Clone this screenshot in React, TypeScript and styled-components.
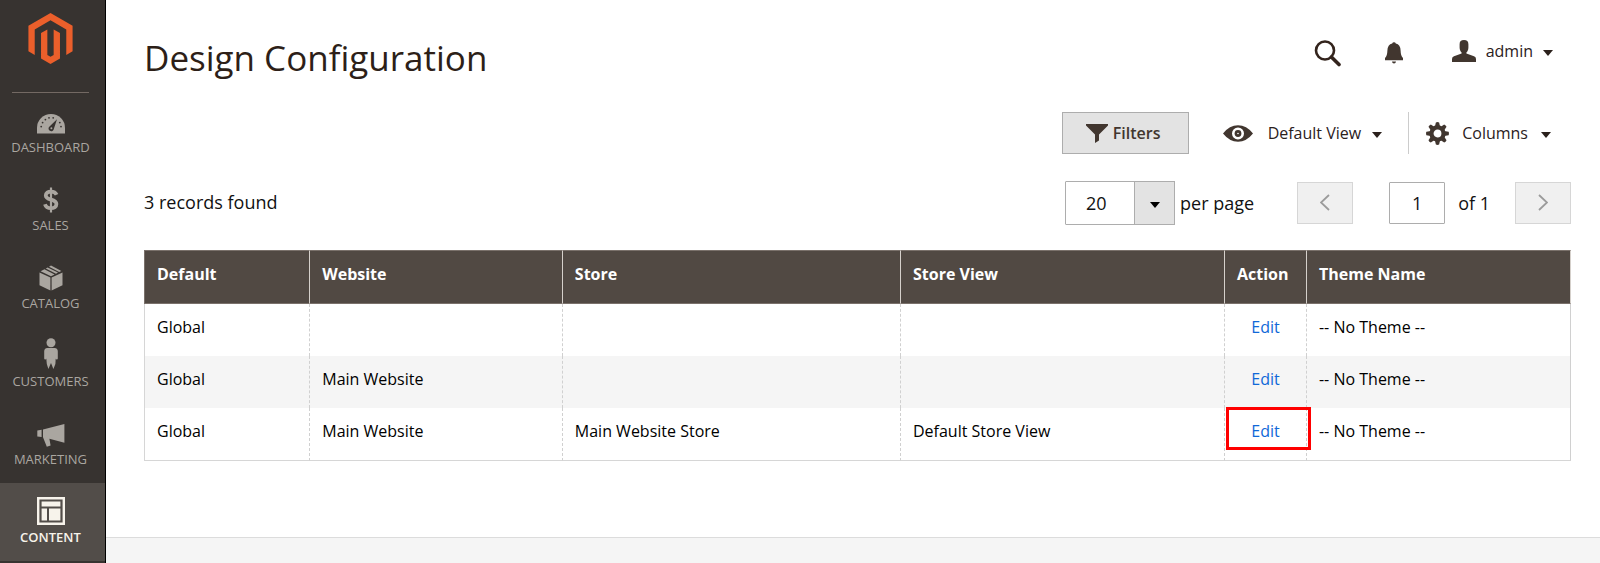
import React from "react";
import styled, { createGlobalStyle } from "styled-components";

const GlobalStyle = createGlobalStyle`
  *, *::before, *::after { box-sizing: border-box; }
  body { margin: 0; background: #fff; }
  body, button, input, select {
    font-family: "Open Sans", "Noto Sans", sans-serif;
    font-size: 16px;
    line-height: 24px;
    color: #111;
  }
  button, input, select { margin: 0; padding: 0; }
`;

const Page = styled.div`
  display: flex;
  min-height: 100vh;
`;

const Sidebar = styled.nav`
  flex: none;
  width: 106px;
  background: #373330;
  border-right: 1px solid #000;
`;

const LogoLink = styled.a`
  display: flex;
  justify-content: center;
  margin: 0 16px 0 12px;
  padding: 13px 0 28px;
  border-bottom: 1px solid #736963;
`;

const MenuList = styled.ul`
  list-style: none;
  margin: 0;
  padding: 0;
`;

const MenuLink = styled.a<{ $active?: boolean }>`
  display: flex;
  flex-direction: column;
  align-items: center;
  height: 78px;
  padding: 12px 4px 0 0;
  font-size: 13px;
  line-height: 20px;
  text-decoration: none;
  color: ${(p) => (p.$active ? "#f7f3eb" : "#aaa6a0")};
  background: ${(p) => (p.$active ? "#524d49" : "transparent")};
  font-weight: ${(p) => (p.$active ? 600 : 400)};
`;

const MenuIcon = styled.span`
  display: flex;
  align-items: flex-end;
  justify-content: center;
  height: 30px;
  margin-bottom: 2px;
`;

const Main = styled.div`
  flex: 1;
  min-width: 0;
  display: flex;
  flex-direction: column;
`;

const Content = styled.main`
  padding: 34px 29px 76px 38px;
`;

const Header = styled.header`
  display: flex;
  justify-content: space-between;
  align-items: flex-start;
  padding-right: 18px;
`;

const Title = styled.h1`
  margin: 0;
  font-size: 35px;
  line-height: 48px;
  font-weight: 400;
  color: #2d1f18;
`;

const HeaderTools = styled.div`
  display: flex;
  align-items: center;
  height: 38px;
  gap: 44px;
`;

const PlainButton = styled.button<{ $gap?: number }>`
  display: flex;
  align-items: center;
  gap: ${(p) => p.$gap ?? 0}px;
  border: 0;
  background: none;
  color: #2b211c;
`;

const UserButton = styled(PlainButton)`
  margin-left: 5px;
  padding-bottom: 4px;
`;

const Toolbar = styled.div`
  display: flex;
  justify-content: flex-end;
  align-items: center;
  margin-top: 30px;
  padding-right: 20px;
`;

const FiltersButton = styled.button`
  display: flex;
  align-items: center;
  justify-content: center;
  gap: 5px;
  width: 127px;
  height: 42px;
  padding-right: 4px;
  border: 1px solid #adadad;
  background: #e3e3e3;
  color: #41362f;
  font-weight: 600;
`;

const ViewButton = styled(PlainButton)`
  margin-left: 34px;
`;

const ColumnsButton = styled(PlainButton)`
  height: 42px;
  margin-left: 26px;
  padding-left: 17px;
  border-left: 1px solid #ccc;
`;

const Caret = styled.span<{ $space?: number }>`
  margin: 3px 0 0 ${(p) => p.$space ?? 0}px;
  border: 5px solid transparent;
  border-top: 6px solid currentColor;
  border-bottom: 0;
`;

const PagingRow = styled.div`
  display: flex;
  align-items: center;
  justify-content: space-between;
  margin-top: 27px;
  font-size: 18px;
`;

const Records = styled.div`
  padding-bottom: 2px;
`;

const Paging = styled.div`
  display: flex;
  align-items: center;
`;

const SelectBox = styled.span`
  display: grid;
  grid-template-columns: 69px 41px;
  height: 44px;
`;

const PageSize = styled.select`
  grid-area: 1 / 1 / 2 / 3;
  appearance: none;
  width: 100%;
  padding-left: 20px;
  border: 1px solid #adadad;
  border-radius: 1px;
  background: #fff;
  font-size: 18px;
`;

const SelectArrow = styled.span`
  grid-area: 1 / 2;
  display: flex;
  align-items: center;
  justify-content: center;
  pointer-events: none;
  border: 1px solid #adadad;
  background: #e3e3e3;
  color: #000;
`;

const PerPage = styled.label`
  margin: 0 43px 0 5px;
`;

const PagerButton = styled.button`
  display: flex;
  align-items: center;
  justify-content: center;
  width: 56px;
  height: 42px;
  border: 1px solid #d6d6d6;
  background: #f0f0f0;
`;

const PageInput = styled.input`
  width: 56px;
  height: 42px;
  margin-left: 36px;
  border: 1px solid #adadad;
  border-radius: 1px;
  text-align: center;
  font-size: 18px;
`;

const PageTotal = styled.label`
  margin: 0 25px 0 13px;
`;

const Grid = styled.table`
  width: 100%;
  margin-top: 25px;
  table-layout: fixed;
  border-collapse: separate;
  border-spacing: 0;
`;

const HeadCell = styled.th`
  height: 54px;
  padding: 0 12px 7px;
  text-align: left;
  font-weight: 700;
  color: #fff;
  background: #514943;
  border-top: 1px solid #7a716b;
  border-bottom: 1px solid #7a716b;
  border-right: 1px solid #d5d0cb;
  &:first-child { border-left: 1px solid #7a716b; }
`;

const Row = styled.tr`
  &:nth-child(even) { background: #f5f5f5; }
  &:last-child td { border-bottom: 1px solid #d6d6d6; height: 53px; }
`;

const Cell = styled.td<{ $center?: boolean }>`
  height: 52px;
  position: relative;
  padding: 0 12px 7px;
  color: #000;
  text-align: ${(p) => (p.$center ? "center" : "left")};
  border-right: 1px dashed #d0d0d0;
  &:first-child { border-left: 1px solid #d6d6d6; }
  &:last-child { border-right-style: solid; }
`;

const EditLink = styled.a`
  color: #1068d8;
  text-decoration: none;
`;

const Highlight = styled.span`
  position: absolute;
  z-index: 1;
  inset: -1px -5px 10px 1px;
  border: 3px solid #f00;
  pointer-events: none;
`;

const Footer = styled.footer`
  flex: 1;
  min-height: 26px;
  border-top: 1px solid #dcdcdc;
  background: #f5f5f5;
`;

const DashboardIcon = () => (
  <svg width="28" height="21" viewBox="0 0 28 21" fill="#aaa6a0">
    <path d="M0 19.5V14A14 14 0 0 1 28 14V19.5Z" />
    <path d="M20 5.2L16.9 14.8A2.7 2.7 0 1 1 12.5 12.4Z" fill="#373330" />
    <circle cx="14.4" cy="14.2" r="1" />
    <g fill="#373330">
      <circle cx="4.2" cy="12.6" r="0.9" />
      <circle cx="5.6" cy="8.6" r="0.9" />
      <circle cx="8.4" cy="5.6" r="0.9" />
      <circle cx="12" cy="3.8" r="0.9" />
      <circle cx="16.2" cy="3.8" r="0.9" />
      <circle cx="22.8" cy="8.6" r="0.9" />
      <circle cx="24" cy="12.6" r="0.9" />
    </g>
  </svg>
);

const SalesIcon = () => (
  <svg width="16" height="26" viewBox="0 0 16 26" fill="none" stroke="#aaa6a0">
    <path d="M13.6 7.8C12.6 5.6 10.6 4.6 8 4.6C5 4.6 2.8 6 2.8 8.6C2.8 14 13.4 11.4 13.4 17C13.4 19.8 11 21.2 8 21.2C5 21.2 2.8 20 2 17.2" strokeWidth="3.8" />
    <path d="M8 0.5V25.5" strokeWidth="2.2" />
  </svg>
);

const CatalogIcon = () => (
  <svg width="24" height="26" viewBox="0 0 24 26" fill="#aaa6a0">
    <path d="M0.5 7.6L11.4 12.4V25.6L0.5 20.2Z" />
    <path d="M23.5 7.6L12.6 12.4V25.6L23.5 20.2Z" />
    <path d="M1.6 6.2L5.4 4.2L15.6 9.4L12 11.2Z" />
    <path d="M6.8 3.4L8.6 2.4L19 7.6L17 8.7Z" />
    <path d="M10 1.7L12 0.5L22.4 6L20.2 7Z" />
  </svg>
);

const CustomersIcon = () => (
  <svg width="14" height="31" viewBox="0 0 14 31" fill="#aaa6a0">
    <circle cx="7" cy="4.7" r="4.5" />
    <path d="M3.4 9.9H10.6Q13.8 10 13.8 13.2V20.4Q13.8 21.4 12.8 21.5Q11.8 21.5 11.7 20.5L11.4 26L9.4 31L7 25L4.4 31L2.8 26L2.3 20.5Q2.2 21.5 1.2 21.5Q0.2 21.4 0.2 20.4V13.2Q0.2 10 3.4 9.9Z" />
  </svg>
);

const MarketingIcon = () => (
  <svg width="28" height="23" viewBox="0 0 28 23" fill="#aaa6a0">
    <path d="M0.3 6.4L4.6 5.8V13L0.3 12.4Z" />
    <path d="M6 5.6L27.4 0V18.8L12.4 14.8L13.6 21.4L9.8 22.8L6 13.2Z" />
  </svg>
);

const ContentIcon = () => (
  <svg width="28" height="28" viewBox="0 0 28 28" fill="#f7f3eb">
    <path fillRule="evenodd" d="M0 0H28V28H0ZM2.4 2.4V25.6H25.6V2.4Z" />
    <path d="M4.6 4.6H23.4V9.6H4.6ZM4.6 11.6H10V23.4H4.6ZM12 11.6H23.4V23.4H12Z" />
  </svg>
);

const MagentoLogo = () => (
  <svg width="51" height="51" viewBox="0 0 24 24" fill="#eb5f2b">
    <path d="M12 24l-4.455-2.572v-12l2.97-1.715v12.001l1.485.902 1.485-.902V7.713l2.971 1.715v12L12 24zM22.391 6v12l-2.969 1.714V7.713L12 3.43 4.574 7.713v12.001L1.609 18V6L12 0l10.391 6z" />
  </svg>
);

const SearchIcon = () => (
  <svg width="27" height="27" viewBox="0 0 27 27" fill="none" stroke="#33241d">
    <circle cx="11" cy="10.5" r="9" strokeWidth="2.6" />
    <path d="M17.4 17L25 24.6" strokeWidth="3.6" strokeLinecap="round" />
  </svg>
);

const BellIcon = () => (
  <svg width="18" height="22" viewBox="0 0 18 22" fill="#41362f">
    <path d="M9 0.3Q10.4 0.3 10.8 1.5Q15.4 2.6 15.6 8.5Q15.7 14 18 16V18.2H0V16Q2.3 14 2.4 8.5Q2.6 2.6 7.2 1.5Q7.6 0.3 9 0.3Z" />
    <path d="M7 19.5H11Q10.8 21.4 9 21.4Q7.2 21.4 7 19.5Z" />
  </svg>
);

const UserIcon = () => (
  <svg width="24" height="22" viewBox="0 0 24 22" fill="#41362f">
    <path d="M12 0C15 0 16.4 1.4 16.4 4.2V7.4C16.4 9.8 15.4 11.4 14.4 12.4V13.6L22 16.2Q24 17 24 19V22H0V19Q0 17 2 16.2L9.6 13.6V12.4C8.6 11.4 7.6 9.8 7.6 7.4V4.2C7.6 1.4 9 0 12 0Z" />
  </svg>
);

const FunnelIcon = () => (
  <svg width="22" height="19" viewBox="0 0 22 19" fill="#41362f">
    <path d="M0 0H22V1.6L13 10.4V16.6L9 19V10.4L0 1.6Z" />
  </svg>
);

const EyeIcon = () => (
  <svg width="30" height="17" viewBox="0 0 30 17" fill="#41362f">
    <path fillRule="evenodd" d="M0 8.5Q6.5 0.3 15 0.3T30 8.5Q23.5 16.7 15 16.7T0 8.5ZM15 2.5A6 6 0 1 0 15 14.5A6 6 0 1 0 15 2.5Z" />
    <circle cx="15" cy="8.5" r="3.4" />
    <circle cx="15" cy="8.5" r="0.8" fill="#fff" />
  </svg>
);

const GearIcon = () => (
  <svg width="23" height="23" viewBox="0 0 24 24" fill="#41362f">
    {[0, 45, 90, 135, 180, 225, 270, 315].map((angle) => (
      <path key={angle} d="M9.3 5L10.3 0.4Q12 -0.3 13.7 0.4L14.7 5Z" transform={`rotate(${angle} 12 12)`} />
    ))}
    <circle cx="12" cy="12" r="6.3" fill="none" stroke="#41362f" strokeWidth="4.4" />
  </svg>
);

const Chevron = ({ next }: { next?: boolean }) => (
  <svg width="10" height="18" viewBox="0 0 10 18" fill="none" stroke="#9b9b9b" strokeWidth="1.8">
    <path d={next ? "M1 1L9 8.5L1 16" : "M9 1L1 8.5L9 16"} />
  </svg>
);

const menu = [
  { label: "DASHBOARD", Icon: DashboardIcon },
  { label: "SALES", Icon: SalesIcon },
  { label: "CATALOG", Icon: CatalogIcon },
  { label: "CUSTOMERS", Icon: CustomersIcon },
  { label: "MARKETING", Icon: MarketingIcon },
  { label: "CONTENT", Icon: ContentIcon, active: true },
];

const columns = [
  { label: "Default", width: "11.65%" },
  { label: "Website", width: "17.7%" },
  { label: "Store", width: "23.7%" },
  { label: "Store View", width: "22.7%" },
  { label: "Action", width: "5.75%" },
  { label: "Theme Name", width: "18.5%" },
];

const rows = [
  { website: "", store: "", view: "" },
  { website: "Main Website", store: "", view: "" },
  { website: "Main Website", store: "Main Website Store", view: "Default Store View", marked: true },
];

export default function App() {
  return (
    <>
      <GlobalStyle />
      <Page>
        <Sidebar aria-label="Main menu">
          <LogoLink href="#" aria-label="Magento Admin">
            <MagentoLogo />
          </LogoLink>
          <MenuList>
            {menu.map(({ label, Icon, active }) => (
              <li key={label}>
                <MenuLink href="#" $active={active}>
                  <MenuIcon><Icon /></MenuIcon>
                  {label}
                </MenuLink>
              </li>
            ))}
          </MenuList>
        </Sidebar>
        <Main>
          <Content>
            <Header>
              <Title>Design Configuration</Title>
              <HeaderTools>
                <PlainButton aria-label="Search"><SearchIcon /></PlainButton>
                <PlainButton aria-label="Notifications"><BellIcon /></PlainButton>
                <UserButton $gap={10}>
                  <UserIcon />
                  admin
                  <Caret />
                </UserButton>
              </HeaderTools>
            </Header>
            <Toolbar>
              <FiltersButton><FunnelIcon />Filters</FiltersButton>
              <ViewButton $gap={15}>
                <EyeIcon />
                Default View
                <Caret $space={-4} />
              </ViewButton>
              <ColumnsButton $gap={13}>
                <GearIcon />
                Columns
                <Caret />
              </ColumnsButton>
            </Toolbar>
            <PagingRow>
              <Records>3 records found</Records>
              <Paging>
                <SelectBox>
                  <PageSize id="page-size" defaultValue="20">
                    <option>20</option>
                    <option>30</option>
                    <option>50</option>
                  </PageSize>
                  <SelectArrow><Caret /></SelectArrow>
                </SelectBox>
                <PerPage htmlFor="page-size">per page</PerPage>
                <PagerButton aria-label="Previous page"><Chevron /></PagerButton>
                <PageInput id="page-number" defaultValue="1" />
                <PageTotal htmlFor="page-number">of 1</PageTotal>
                <PagerButton aria-label="Next page"><Chevron next /></PagerButton>
              </Paging>
            </PagingRow>
            <Grid>
              <colgroup>
                {columns.map((c) => <col key={c.label} width={c.width} />)}
              </colgroup>
              <thead>
                <tr>{columns.map((c) => <HeadCell key={c.label} scope="col">{c.label}</HeadCell>)}</tr>
              </thead>
              <tbody>
                {rows.map((row, i) => (
                  <Row key={i}>
                    <Cell>Global</Cell>
                    <Cell>{row.website}</Cell>
                    <Cell>{row.store}</Cell>
                    <Cell>{row.view}</Cell>
                    <Cell $center>
                      <EditLink href="#">Edit</EditLink>
                      {row.marked && <Highlight />}
                    </Cell>
                    <Cell>-- No Theme --</Cell>
                  </Row>
                ))}
              </tbody>
            </Grid>
          </Content>
          <Footer />
        </Main>
      </Page>
    </>
  );
}
